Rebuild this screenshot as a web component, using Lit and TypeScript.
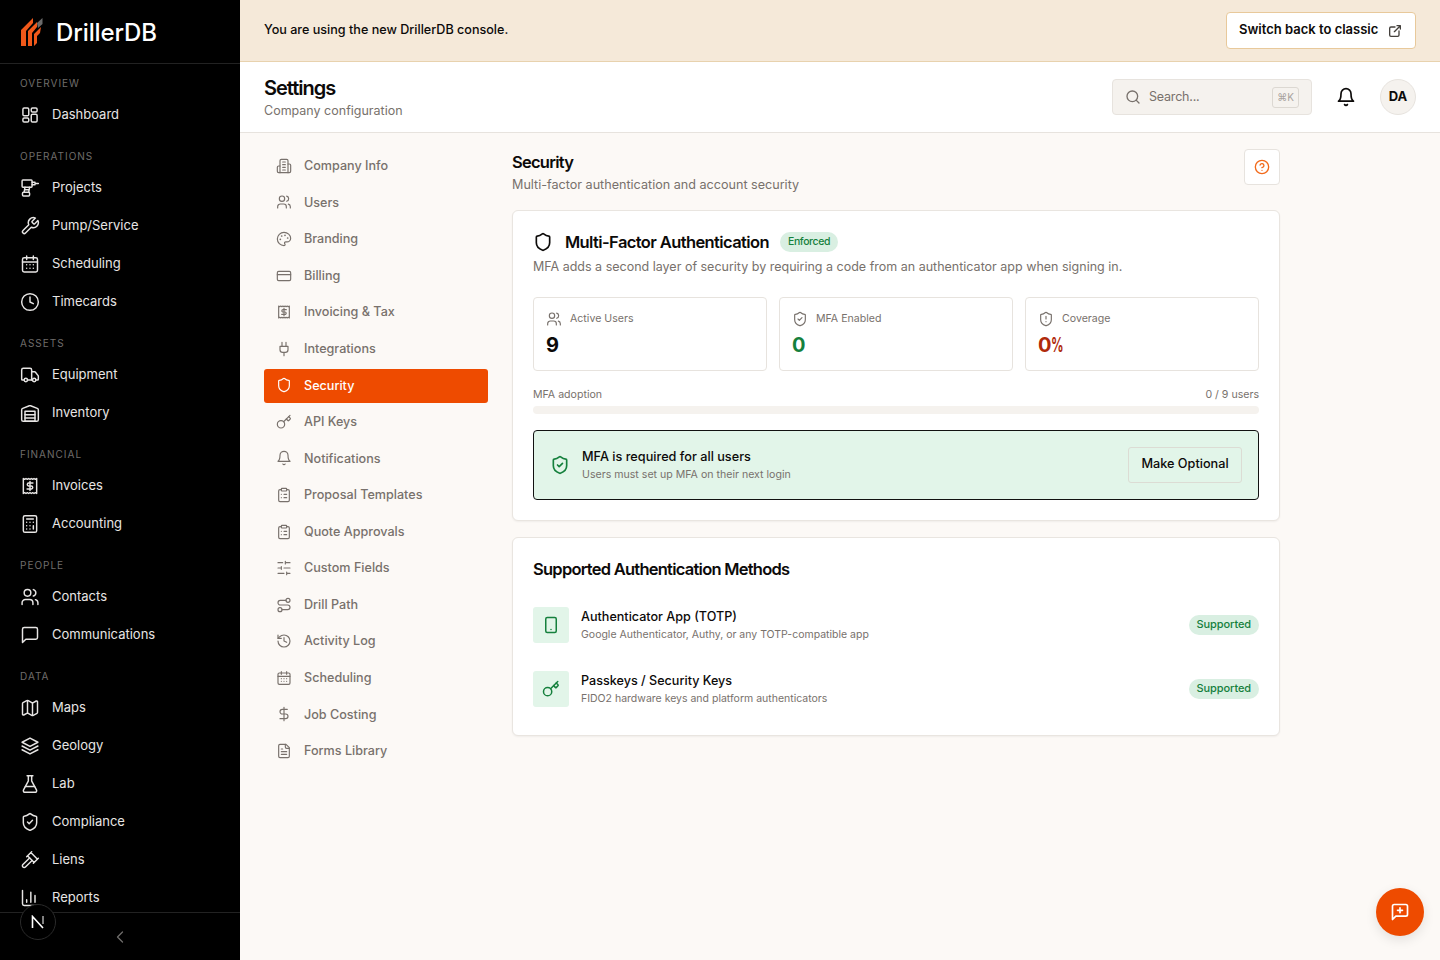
import { LitElement, html, css, svg } from 'lit';
import { customElement } from 'lit/decorators.js';

const shieldPath = 'M20 13c0 5-3.5 7.5-7.66 8.95a1 1 0 0 1-.67-.01C7.5 20.5 4 18 4 13V6a1 1 0 0 1 1-1c2 0 4.5-1.2 6.24-2.72a1.17 1.17 0 0 1 1.52 0C14.51 3.81 17 5 19 5a1 1 0 0 1 1 1z';
const chat = 'M21 15a2 2 0 0 1-2 2H7l-4 4V5a2 2 0 0 1 2-2h14a2 2 0 0 1 2 2z';

const icons: Record<string, any> = {
  dashboard: svg`<rect x="3.5" y="3.5" width="7" height="9.5" rx="1.5"/><rect x="13.5" y="3.5" width="7" height="5" rx="1.5"/><rect x="13.5" y="11" width="7" height="9.5" rx="1.5"/><rect x="3.5" y="15.5" width="7" height="5" rx="1.5"/>`,
  drill: svg`<path d="M3.5 2.5h10a1 1 0 0 1 1 1v6.5a1 1 0 0 1-1 1h-10a1 1 0 0 1-1-1V3.500a1 1 0 0 1 1-1z"/><path d="M14.500 5h3.500M18 6.500h4M14.500 8h3.500"/><path d="M6 11l-1 6M11.500 11l-1 6M6 14h5"/><rect x="3" y="17" width="8.500" height="4.500" rx="1.200"/>`,
  wrench: svg`<path d="M14.7 6.3a1 1 0 0 0 0 1.4l1.6 1.6a1 1 0 0 0 1.4 0l3.77-3.77a6 6 0 0 1-7.94 7.94l-6.91 6.91a2.12 2.12 0 0 1-3-3l6.91-6.91a6 6 0 0 1 7.94-7.94l-3.76 3.76z"/>`,
  calendar: svg`<rect x="3" y="4.5" width="18" height="17" rx="2"/><path d="M8 2.5v4M16 2.5v4M3 9.5h18M8 13h.01M12 13h.01M16 13h.01M8 17h.01M12 17h.01M16 17h.01"/>`,
  clock: svg`<circle cx="12" cy="12" r="10"/><path d="M12 6v6l4 2"/>`,
  truck: svg`<path d="M14 18V6a2 2 0 0 0-2-2H4a2 2 0 0 0-2 2v11a1 1 0 0 0 1 1h2"/><path d="M15 18H9"/><path d="M19 18h2a1 1 0 0 0 1-1v-3.65a1 1 0 0 0-.22-.624l-3.48-4.35A1 1 0 0 0 17.52 8H14"/><circle cx="17" cy="18" r="2"/><circle cx="7" cy="18" r="2"/>`,
  warehouse: svg`<path d="M22 8.35V20a2 2 0 0 1-2 2H4a2 2 0 0 1-2-2V8.35A2 2 0 0 1 3.26 6.5l8-3.2a2 2 0 0 1 1.48 0l8 3.2A2 2 0 0 1 22 8.35Z"/><path d="M6 18h12M6 14h12"/><rect x="6" y="10" width="12" height="12"/>`,
  receipt: svg`<path d="M4 3l1.6 1 1.6-1 1.6 1 1.6-1 1.6 1 1.6-1 1.6 1 1.6-1 1.6 1 1.6-1v18l-1.6-1-1.6 1-1.6-1-1.6 1-1.6-1-1.6 1-1.6-1-1.6 1-1.6-1-1.6 1z"/><path d="M15.500 8.500h-5a1.750 1.750 0 0 0 0 3.500h3a1.750 1.750 0 0 1 0 3.500h-5M12 6.500v11"/>`,
  calculator: svg`<rect x="4" y="2" width="16" height="20" rx="2"/><path d="M8 6h8M16 14v4M16 10h.01M12 10h.01M8 10h.01M12 14h.01M8 14h.01M12 18h.01M8 18h.01"/>`,
  users: svg`<circle cx="9" cy="7" r="4"/><path d="M2.5 21v-2a4 4 0 0 1 4-4h5a4 4 0 0 1 4 4v2"/><path d="M16 3.13a4 4 0 0 1 0 7.75M21.5 21v-2a4 4 0 0 0-3-3.85"/>`,
  chat: svg`<path d="${chat}"/>`,
  map: svg`<path d="M3 6.5a1 1 0 0 1 .6-.9l4.5-2.4a2 2 0 0 1 1.8 0l4.2 2.4a2 2 0 0 0 1.8 0l3.6-2a1 1 0 0 1 1.5.9v13a1 1 0 0 1-.6.9l-4.5 2.4a2 2 0 0 1-1.8 0l-4.2-2.4a2 2 0 0 0-1.8 0l-3.6 2a1 1 0 0 1-1.5-.9z"/><path d="M9 3.2v15M15 5.8v15"/>`,
  layers: svg`<path d="M12 2.5l9.5 5-9.5 5-9.5-5z"/><path d="M2.5 12l9.5 5 9.5-5M2.5 16.5l9.5 5 9.5-5"/>`,
  flask: svg`<path d="M14 2v6a2 2 0 0 0 .245.96l5.51 10.08A2 2 0 0 1 18 22H6a2 2 0 0 1-1.755-2.96l5.51-10.08A2 2 0 0 0 10 8V2"/><path d="M6.453 15h11.094M8.5 2h7"/>`,
  shieldCheck: svg`<path d="${shieldPath}"/><path d="m9 12 2 2 4-4"/>`,
  gavel: svg`<path d="m14.5 12.5-8 8a2.119 2.119 0 1 1-3-3l8-8"/><path d="m16 16 6-6M8 8l6-6M9 7l8 8M21 11l-8-8"/>`,
  chart: svg`<path d="M3 3v16a2 2 0 0 0 2 2h16"/><path d="M18 17V9M13 17V5M8 17v-3"/>`,
  building: svg`<path d="M6 22V4a2 2 0 0 1 2-2h8a2 2 0 0 1 2 2v18Z"/><path d="M6 12H4a2 2 0 0 0-2 2v6a2 2 0 0 0 2 2h2M18 9h2a2 2 0 0 1 2 2v9a2 2 0 0 1-2 2h-2M10 6h4M10 10h4M10 14h4M10 18h4"/>`,
  palette: svg`<path d="M12 2C6.5 2 2 6.5 2 12s4.5 10 10 10c.926 0 1.648-.746 1.648-1.688 0-.437-.18-.835-.437-1.125-.29-.289-.438-.652-.438-1.125a1.64 1.64 0 0 1 1.668-1.668h1.996c3.051 0 5.555-2.503 5.555-5.554C21.965 6.012 17.461 2 12 2z"/><path stroke-width="2.600" d="M13.500 6.500h.01M17.500 10.500h.01M8.500 7.500h.01M6.500 12.500h.01"/>`,
  card: svg`<rect x="2" y="5" width="20" height="14" rx="2"/><path d="M2 10h20"/>`,
  plug: svg`<path d="M12 22v-5M9 8V2M15 8V2M18 8v5a4 4 0 0 1-4 4h-4a4 4 0 0 1-4-4V8Z"/>`,
  shield: svg`<path d="${shieldPath}"/>`,
  shieldAlert: svg`<path d="${shieldPath}"/><path d="M12 8v4M12 16h.01"/>`,
  key: svg`<path d="m15.5 7.5 2.3 2.3a1 1 0 0 0 1.4 0l2.1-2.1a1 1 0 0 0 0-1.4L19 4"/><path d="m21 2-9.6 9.6"/><circle cx="7.5" cy="15.5" r="5.5"/>`,
  bell: svg`<path d="M6 8a6 6 0 0 1 12 0c0 7 3 9 3 9H3s3-2 3-9"/><path d="M10.3 21a1.94 1.94 0 0 0 3.4 0"/>`,
  clipboard: svg`<rect x="8" y="2" width="8" height="4" rx="1"/><path d="M16 4h2a2 2 0 0 1 2 2v14a2 2 0 0 1-2 2H6a2 2 0 0 1-2-2V6a2 2 0 0 1 2-2h2M12 11h4M12 16h4M8 11h.01M8 16h.01"/>`,
  sliders: svg`<path d="M21 4h-7M10 4H3M21 12h-9M8 12H3M21 20h-5M12 20H3M14 2v4M8 10v4M16 18v4"/>`,
  route: svg`<circle cx="6" cy="19" r="3"/><path d="M9 19h8.5a3.5 3.5 0 0 0 0-7h-11a3.5 3.5 0 0 1 0-7H15"/><circle cx="18" cy="5" r="3"/>`,
  history: svg`<path d="M3 12a9 9 0 1 0 9-9 9.75 9.75 0 0 0-6.74 2.74L3 8"/><path d="M3 3v5h5M12 7v5l4 2"/>`,
  dollar: svg`<path d="M12 2v20M17 5H9.5a3.5 3.5 0 0 0 0 7h5a3.5 3.5 0 0 1 0 7H6"/>`,
  file: svg`<path d="M15 2H6a2 2 0 0 0-2 2v16a2 2 0 0 0 2 2h12a2 2 0 0 0 2-2V7Z"/><path d="M14 2v4a2 2 0 0 0 2 2h4M10 9H8M16 13H8M16 17H8"/>`,
  search: svg`<circle cx="11" cy="11" r="8"/><path d="m21 21-4.3-4.3"/>`,
  external: svg`<path d="M12 6H6a2 2 0 0 0-2 2v10a2 2 0 0 0 2 2h10a2 2 0 0 0 2-2v-6M11 13l9-9M15 4h5v5"/>`,
  help: svg`<circle cx="12" cy="12" r="10"/><path d="M9.09 9a3 3 0 0 1 5.83 1c0 2-3 3-3 3M12 17h.01"/>`,
  phone: svg`<rect x="5" y="2" width="14" height="20" rx="2"/><path d="M12 18h.01"/>`,
  chatPlus: svg`<path d="${chat}"/><path d="M12 7v6M9 10h6"/>`,
  chevron: svg`<path d="m15 18-6-6 6-6"/>`,
};

const icon = (name: string, size = 16, sw = 1.75) => html`<svg class="ic" width=${size} height=${size} viewBox="0 0 24 24" fill="none" stroke="currentColor" stroke-width=${sw} stroke-linecap="round" stroke-linejoin="round">${icons[name]}</svg>`;

const navGroups = [
  { label: 'Overview', items: [['dashboard', 'Dashboard']] },
  { label: 'Operations', items: [['drill', 'Projects'], ['wrench', 'Pump/Service'], ['calendar', 'Scheduling'], ['clock', 'Timecards']] },
  { label: 'Assets', items: [['truck', 'Equipment'], ['warehouse', 'Inventory']] },
  { label: 'Financial', items: [['receipt', 'Invoices'], ['calculator', 'Accounting']] },
  { label: 'People', items: [['users', 'Contacts'], ['chat', 'Communications']] },
  { label: 'Data', items: [['map', 'Maps'], ['layers', 'Geology'], ['flask', 'Lab'], ['shieldCheck', 'Compliance'], ['gavel', 'Liens'], ['chart', 'Reports']] },
];

const settingsItems = [
  ['building', 'Company Info'], ['users', 'Users'], ['palette', 'Branding'], ['card', 'Billing'],
  ['receipt', 'Invoicing & Tax'], ['plug', 'Integrations'], ['shield', 'Security'], ['key', 'API Keys'],
  ['bell', 'Notifications'], ['clipboard', 'Proposal Templates'], ['clipboard', 'Quote Approvals'],
  ['sliders', 'Custom Fields'], ['route', 'Drill Path'], ['history', 'Activity Log'], ['calendar', 'Scheduling'],
  ['dollar', 'Job Costing'], ['file', 'Forms Library'],
];

const stats = [
  { icon: 'users', label: 'Active Users', value: '9', unit: '', cls: '' },
  { icon: 'shieldCheck', label: 'MFA Enabled', value: '0', unit: '', cls: 'green' },
  { icon: 'shieldAlert', label: 'Coverage', value: '0', unit: '%', cls: 'red' },
];

const methods = [
  { icon: 'phone', title: 'Authenticator App (TOTP)', sub: 'Google Authenticator, Authy, or any TOTP-compatible app' },
  { icon: 'key', title: 'Passkeys / Security Keys', sub: 'FIDO2 hardware keys and platform authenticators' },
];

@customElement('app-root')
export class AppRoot extends LitElement {
  static override styles = css`
    :host {
      display: flex;
      height: 960px;
      overflow: hidden;
      position: relative;
      font-family: Inter, 'Liberation Sans', sans-serif;
      font-size: 13px;
      line-height: 19.5px;
      color: #0c0a09;
      background: #fcf9f6;
    }
    * { box-sizing: border-box; }
    .ic { flex: none; display: block; }

    .sidebar {
      width: 240px;
      flex: none;
      background: #000;
      color: #e7e5e4;
      display: flex;
      flex-direction: column;
      height: 960px;
    }
    .brand {
      height: 64px;
      flex: none;
      border-bottom: 1px solid #222;
      display: flex;
      align-items: center;
      padding-left: 20px;
      gap: 13px;
    }
    .brand-name {
      margin-top: 3px;
      font-size: 24px;
      font-weight: 500;
      color: #fff;
      letter-spacing: -0.1px;
    }
    .nav {
      flex: 1;
      overflow: hidden;
      padding-top: 12px;
      display: flex;
      flex-direction: column;
      gap: 15px;
      min-height: 0;
    }
    .group-label {
      height: 14px;
      line-height: 14px;
      margin: 0 0 6px 20px;
      font-size: 10px;
      letter-spacing: 1px;
      text-transform: uppercase;
      color: #6f6d6b;
    }
    .nav-row {
      height: 38px;
      display: flex;
      align-items: center;
      gap: 12px;
      padding-left: 20px;
    }
    .side-foot {
      height: 48px;
      flex: none;
      border-top: 1px solid #222;
      display: flex;
      align-items: center;
      justify-content: center;
      color: #6f6d6b;
      background: #000;
    }
    .dev-badge {
      position: absolute;
      left: 20px;
      top: 904px;
      width: 36px;
      height: 36px;
      border-radius: 50%;
      background: #000;
      border: 1px solid #2a2a2a;
      color: #fff;
      display: flex;
      align-items: center;
      justify-content: center;
    }

    .main { flex: 1; min-width: 0; display: flex; flex-direction: column; }
    .banner {
      height: 62px;
      flex: none;
      background: #f5e9d9;
      border-bottom: 1px solid #e8d2ae;
      display: flex;
      align-items: center;
      justify-content: space-between;
      padding: 0 24px;
      font-size: 12.6px;
      font-weight: 500;
    }
    .banner > span { padding-bottom: 2px; }
    .classic {
      width: 190px;
      height: 37px;
      background: #fff;
      border: 1px solid #e8c99b;
      border-radius: 4px;
      display: flex;
      align-items: center;
      gap: 9px;
      padding-left: 12px;
      font-size: 13px;
      font-weight: 600;
    }
    .classic span { padding-bottom: 2px; }
    .classic .ic { color: #44403c; }
    .top {
      height: 71px;
      flex: none;
      background: #fff;
      border-bottom: 1px solid #e7e3de;
      display: flex;
      align-items: center;
      padding: 0 24px;
    }
    .top-text { flex: 1; padding-top: 2px; }
    .page-title { font-size: 20px; line-height: 26px; font-weight: 600; letter-spacing: -1px; }
    .muted { color: #78716c; font-size: 12.5px; }
    .search {
      width: 200px;
      height: 36px;
      background: #f5f2ee;
      border: 1px solid #e7e3de;
      border-radius: 4px;
      display: flex;
      align-items: center;
      gap: 8px;
      padding: 0 12px;
      color: #78716c;
      font-size: 12.5px;
      letter-spacing: -0.2px;
    }
    .search span:first-of-type { flex: 1; }
    .kbd {
      width: 27px;
      height: 21px;
      border: 1px solid #dcd8d2;
      border-radius: 3px;
      font-size: 10px;
      line-height: 19px;
      text-align: center;
      color: #a8a29e;
    }
    .bell { margin: 0 24px 0 24px; color: #0c0a09; }
    .avatar {
      width: 36px;
      height: 36px;
      border-radius: 50%;
      background: #f5f2ee;
      border: 1px solid #e7e3de;
      display: flex;
      align-items: center;
      justify-content: center;
      font-weight: 700;
    }

    .body { flex: 1; display: flex; padding: 16px 24px; gap: 24px; min-height: 0; }
    .settings-nav { width: 224px; flex: none; display: flex; flex-direction: column; gap: 2px; margin-top: 0.15px; }
    .settings-item {
      height: 34.5625px;
      flex: none;
      display: flex;
      align-items: center;
      gap: 12px;
      padding: 0 0 1.06px 12px;
      border-radius: 3px;
      color: #78716c;
      font-size: 12.6px;
      font-weight: 500;
    }
    .settings-item.active { background: #ee4b00; color: #fff; }

    .content { width: 768px; flex: none; }
    .content-head { display: flex; justify-content: space-between; margin-bottom: 25px; height: 36px; }
    .section-title { font-size: 16.5px; line-height: 26px; font-weight: 600; letter-spacing: -0.75px; color: #0c0a09; }
    .content-head .muted { font-size: 12.6px; }
    .help {
      width: 36px;
      height: 36px;
      background: #fff;
      border: 1px solid #e7e3de;
      border-radius: 4px;
      display: flex;
      align-items: center;
      justify-content: center;
      color: #f26a1b;
    }
    .card {
      background: #fff;
      border: 1px solid #e9e5e0;
      border-radius: 6px;
      box-shadow: 0 1px 2px rgba(0,0,0,.05);
      padding: 20px;
    }
    .card + .card { margin-top: 16px; padding-bottom: 28px; }
    .mfa-head { display: flex; align-items: center; height: 22px; }
    .mfa-head .ic { margin-right: 12px; }
    .mfa-head .section-title { margin-right: 11px; letter-spacing: -0.6px; }
    .pill {
      display: inline-flex;
      align-items: center;
      height: 20px;
      padding: 0 8px;
      border-radius: 10px;
      background: #d9efe2;
      color: #15803d;
      font-size: 11px;
      font-weight: 500;
      letter-spacing: -0.1px;
    }
    .pill.tight { font-size: 10.5px; letter-spacing: -0.4px; }
    .desc { margin-top: 4px; }
    .stats { display: grid; grid-template-columns: repeat(3, 1fr); gap: 12px; margin-top: 20px; }
    .stat {
      height: 74px;
      border: 1px solid #e7e3de;
      border-radius: 4px;
      padding: 13px 12px 0;
    }
    .stat-label { display: flex; align-items: center; gap: 8px; font-size: 10.6px; line-height: 16px; color: #78716c; }
    .stat-value { margin-top: 5px; font-size: 20px; line-height: 26px; font-weight: 700; display: flex; }
    .stat-unit { display: inline-block; transform: scaleX(0.62); transform-origin: left; margin-left: -1px; }
    .green { color: #15803d; }
    .red { color: #b02a0b; }
    .progress-labels {
      display: flex;
      justify-content: space-between;
      margin-top: 16px;
      font-size: 10.6px;
      line-height: 16px;
      color: #78716c;
    }
    .progress { height: 8px; margin-top: 3px; border-radius: 4px; background: #f5f2ee; }
    .callout {
      margin-top: 16px;
      height: 70px;
      background: #e2f5e9;
      border: 1px solid #111;
      border-radius: 4px;
      display: flex;
      align-items: center;
      padding: 0 16px;
    }
    .callout > .ic { color: #15803d; margin-right: 12px; }
    .callout-text { flex: 1; padding-top: 2px; }
    .callout-title { font-size: 12.7px; font-weight: 500; line-height: 18px; }
    .small { font-size: 10.6px; line-height: 18px; color: #78716c; }
    .btn {
      width: 114px;
      height: 36px;
      border: 1px solid #dcdcd4;
      border-radius: 3px;
      display: flex;
      align-items: center;
      justify-content: center;
      padding-bottom: 2px;
      font-size: 12.7px;
      font-weight: 500;
    }
    .methods-title { margin-bottom: 27px; line-height: 22px; }
    .method { display: flex; align-items: center; height: 36px; gap: 12px; }
    .method + .method { margin-top: 28px; }
    .method-icon {
      width: 36px;
      height: 36px;
      background: #e2f5e9;
      border-radius: 3px;
      display: flex;
      align-items: center;
      justify-content: center;
      color: #15803d;
    }
    .method-text { flex: 1; padding-top: 2px; }
    .method-title { font-size: 12.6px; font-weight: 500; line-height: 18px; }
    .method-text .small { font-size: 10.5px; }
    .fab {
      position: absolute;
      right: 16px;
      bottom: 24px;
      width: 48px;
      height: 48px;
      border-radius: 50%;
      background: #ee4b00;
      color: #fff;
      display: flex;
      align-items: center;
      justify-content: center;
      box-shadow: 0 4px 12px rgba(0,0,0,.1);
    }
  `;

  private renderSidebar() {
    return html`
      <aside class="sidebar">
        <div class="brand">
          <svg width="23" height="30" viewBox="0 0 23 30">
            <polygon fill="#f0581a" points="1,13 13,1 13,6 6,14 6,29 1,29" />
            <polygon fill="#f0581a" points="8,14 17,5 17,10 12,16 12,29 8,29" />
            <polygon fill="#6b6b6b" points="17,6 22.5,1 22.5,7 18,11" />
            <polygon fill="#f0581a" points="14,17 21,10 20,16 17,19 17,26 14,29" />
          </svg>
          <span class="brand-name">DrillerDB</span>
        </div>
        <nav class="nav">
          ${navGroups.map(g => html`
            <div>
              <div class="group-label">${g.label}</div>
              ${g.items.map(([ic, label]) => html`<div class="nav-row">${icon(ic, 20)}<span>${label}</span></div>`)}
            </div>
          `)}
        </nav>
        <div class="side-foot">${icon('chevron', 20, 1.5)}</div>
      </aside>
      <div class="dev-badge">
        <svg width="14" height="14" viewBox="0 0 14 14" fill="none" stroke="currentColor" stroke-width="1.6"><path d="M1.5 13V1.5L12 13"/><path d="M12 1v8" stroke-width="1"/></svg>
      </div>
    `;
  }

  private renderSettingsNav() {
    return html`
      <div class="settings-nav">
        ${settingsItems.map(([ic, label]) => html`
          <div class="settings-item ${label === 'Security' ? 'active' : ''}">${icon(ic)}<span>${label}</span></div>
        `)}
      </div>
    `;
  }

  private renderContent() {
    return html`
      <div class="content">
        <div class="content-head">
          <div>
            <div class="section-title">Security</div>
            <div class="muted">Multi-factor authentication and account security</div>
          </div>
          <div class="help">${icon('help', 16, 2)}</div>
        </div>

        <section class="card">
          <div class="mfa-head">
            ${icon('shield', 20, 2)}
            <span class="section-title">Multi-Factor Authentication</span>
            <span class="pill tight">Enforced</span>
          </div>
          <div class="muted desc">MFA adds a second layer of security by requiring a code from an authenticator app when signing in.</div>
          <div class="stats">
            ${stats.map(s => html`
              <div class="stat">
                <div class="stat-label">${icon(s.icon)}<span>${s.label}</span></div>
                <div class="stat-value ${s.cls}">${s.value}${s.unit ? html`<span class="stat-unit">${s.unit}</span>` : ''}</div>
              </div>
            `)}
          </div>
          <div class="progress-labels"><span>MFA adoption</span><span>0 / 9 users</span></div>
          <div class="progress"></div>
          <div class="callout">
            ${icon('shieldCheck', 20, 2)}
            <div class="callout-text">
              <div class="callout-title">MFA is required for all users</div>
              <div class="small">Users must set up MFA on their next login</div>
            </div>
            <div class="btn">Make Optional</div>
          </div>
        </section>

        <section class="card">
          <div class="section-title methods-title">Supported Authentication Methods</div>
          ${methods.map(m => html`
            <div class="method">
              <div class="method-icon">${icon(m.icon, 18, 2)}</div>
              <div class="method-text">
                <div class="method-title">${m.title}</div>
                <div class="small">${m.sub}</div>
              </div>
              <span class="pill">Supported</span>
            </div>
          `)}
        </section>
      </div>
    `;
  }

  override render() {
    return html`
      ${this.renderSidebar()}
      <div class="main">
        <div class="banner">
          <span>You are using the new DrillerDB console.</span>
          <div class="classic"><span>Switch back to classic</span>${icon('external', 16, 2)}</div>
        </div>
        <header class="top">
          <div class="top-text">
            <div class="page-title">Settings</div>
            <div class="muted">Company configuration</div>
          </div>
          <div class="search">${icon('search', 16, 2)}<span>Search...</span><span class="kbd">⌘K</span></div>
          <div class="bell">${icon('bell', 20, 2)}</div>
          <div class="avatar">DA</div>
        </header>
        <div class="body">
          ${this.renderSettingsNav()}
          ${this.renderContent()}
        </div>
      </div>
      <div class="fab">${icon('chatPlus', 20, 2)}</div>
    `;
  }
}

declare global {
  interface HTMLElementTagNameMap {
    'app-root': AppRoot;
  }
}
